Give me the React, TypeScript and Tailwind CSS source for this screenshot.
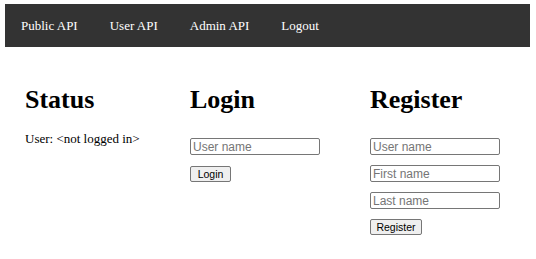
import React from 'react';

const navItems = ['Public API', 'User API', 'Admin API', 'Logout'];

const inputClass =
  'block w-[130px] h-[17px] border border-[#767676] rounded-[2px] pl-[2px] text-[12px] leading-[14px] text-black placeholder:text-[#757575] bg-white outline-none';

const buttonClass =
  'block h-[16px] border border-[#767676] rounded-[2px] bg-[#efefef] text-[10.5px] leading-[12px] text-black text-center';

export default function App() {
  return (
    <div className="w-[536px] h-[259px] bg-white font-['Liberation_Serif',serif] text-black">
      {/* Top navigation */}
      <nav className="ml-[5px] mt-[4px] w-[525px] h-[43px] bg-[#333333] flex items-center">
        {navItems.map((item) => (
          <a key={item} className="px-4 text-[13px] text-white cursor-pointer">
            {item}
          </a>
        ))}
      </nav>

      <main className="flex pl-[25px] mt-[38px]">
        {/* Status */}
        <section className="w-[165px]">
          <h1 className="text-[26px] font-bold leading-[29px]">Status</h1>
          <p className="mt-[17px] text-[13px] leading-[15px]">User: &lt;not logged in&gt;</p>
        </section>

        {/* Login */}
        <section className="w-[180px]">
          <h1 className="text-[26px] font-bold leading-[29px]">Login</h1>
          <form
            className="mt-[24px] flex flex-col gap-[11px] font-['Liberation_Sans',sans-serif]"
            onSubmit={(e) => e.preventDefault()}
          >
            <input className={inputClass} placeholder="User name" />
            <button type="submit" className={`${buttonClass} w-[41px]`}>
              Login
            </button>
          </form>
        </section>

        {/* Register */}
        <section>
          <h1 className="text-[26px] font-bold leading-[29px]">Register</h1>
          <form
            className="mt-[24px] flex flex-col gap-[10px] font-['Liberation_Sans',sans-serif]"
            onSubmit={(e) => e.preventDefault()}
          >
            <input className={inputClass} placeholder="User name" />
            <input className={inputClass} placeholder="First name" />
            <input className={inputClass} placeholder="Last name" />
            <button type="submit" className={`${buttonClass} w-[52px]`}>
              Register
            </button>
          </form>
        </section>
      </main>
    </div>
  );
}
